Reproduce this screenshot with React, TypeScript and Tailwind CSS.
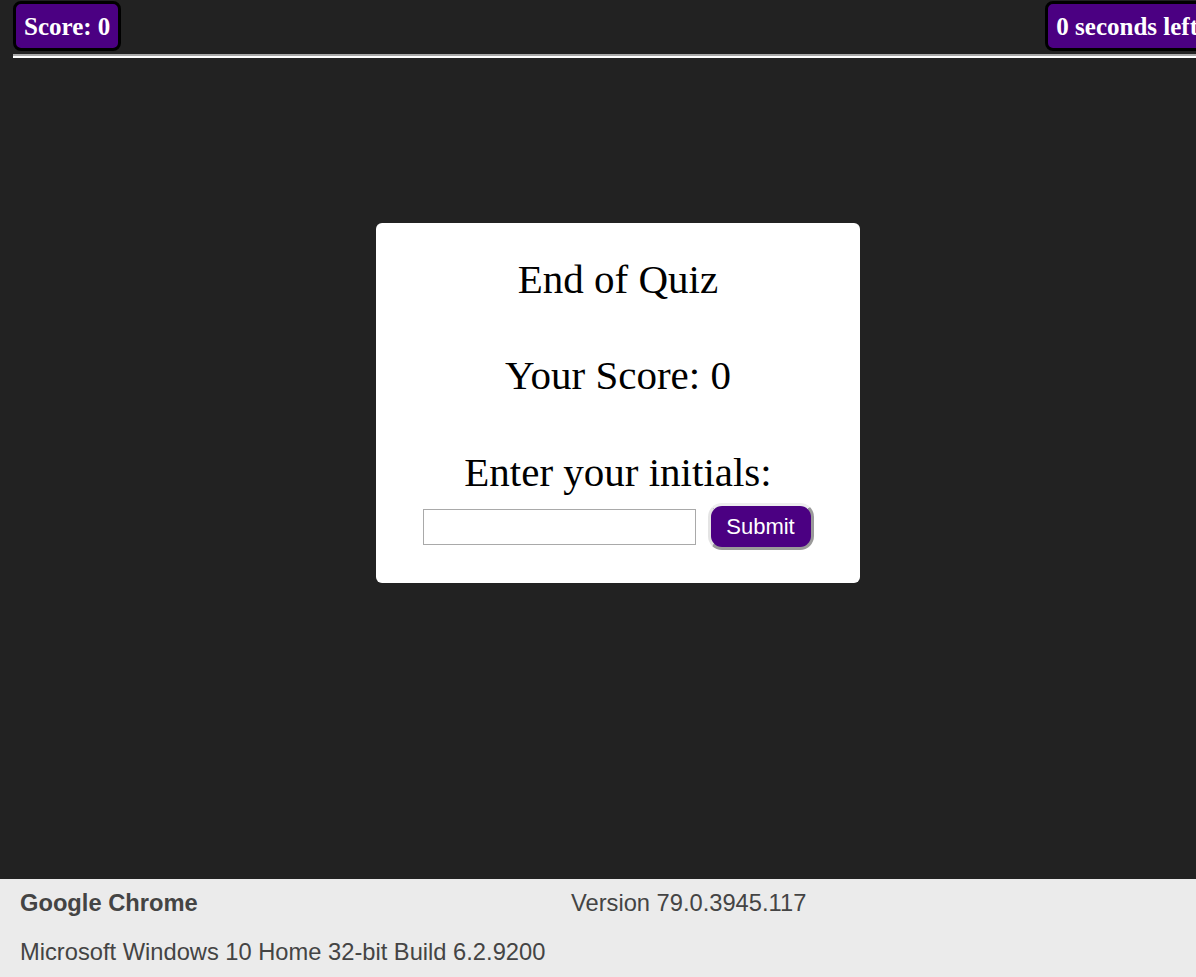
import { useState } from "react"

const serif = "[font-family:'Liberation_Serif','Times_New_Roman',serif]"

export default function App() {
  const [initials, setInitials] = useState("")

  return (
    <div className="flex h-[977px] w-full flex-col overflow-hidden bg-[#222222]">
      <main className="flex-1">
        <div className="ml-[13px] w-[1210px]">
          <header className={`flex h-[53px] items-start justify-between pt-[1px] ${serif}`}>
            <div className="flex h-[50px] items-center rounded-[8px] border-[3px] border-black bg-[#4b0082] px-[8px] pt-[2px] text-[25px] font-bold text-white">
              Score: 0
            </div>
            <div className="mr-[14px] flex h-[50px] items-center rounded-[8px] border-[3px] border-black bg-[#4b0082] px-[8px] pt-[2px] text-[25px] font-bold whitespace-nowrap text-white">
              0 seconds left
            </div>
          </header>
          <div className="mt-[1px] h-[4px] border-t-2 border-b-2 border-t-[#a8a8a8] border-b-white" />

          <section
            className={`mx-auto mt-[165px] flex w-[484px] flex-col items-center rounded-[6px] bg-white pt-[33px] pb-[33px] text-black ${serif}`}
          >
            <h1 className="text-[41px] leading-[47px]">End of Quiz</h1>
            <p className="mt-[49px] text-[41px] leading-[47px]">Your Score: 0</p>
            <p className="mt-[50px] text-[41px] leading-[47px]">Enter your initials:</p>
            <div className="mt-[7px] flex items-center gap-[12px]">
              <input
                value={initials}
                onChange={(e) => setInitials(e.target.value)}
                className="h-[36px] w-[273px] border border-[#a9a9a9] px-2 text-base outline-none"
              />
              <button className="flex h-[47px] w-[106px] items-center justify-center rounded-[14px] border-[3px] border-t-[#eeeeee] border-l-[#e4e4e4] border-r-[#9a9a9a] border-b-[#9a9a9a] bg-[#4b0082] font-['Liberation_Sans',Arial,sans-serif] text-[22px] text-white">
                Submit
              </button>
            </div>
          </section>
        </div>
      </main>

      <footer className="h-[98px] bg-[#ebebeb] pt-[12px] pl-[20px] font-['Liberation_Sans',Arial,sans-serif] text-[23.7px] leading-[25px] text-[#444444]">
        <div className="flex">
          <span className="w-[551px] font-bold">Google Chrome</span>
          <span>Version 79.0.3945.117</span>
        </div>
        <div className="mt-[24px]">Microsoft Windows 10 Home 32-bit Build 6.2.9200</div>
      </footer>
    </div>
  )
}
